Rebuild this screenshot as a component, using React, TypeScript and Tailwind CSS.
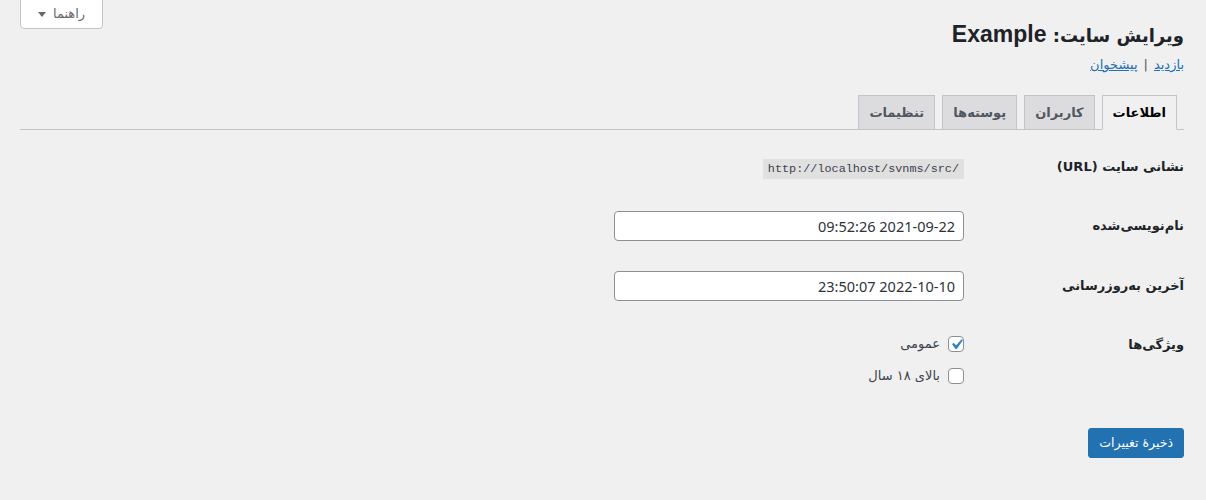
import React, { useState } from 'react'

const fa = { fontFamily: '"DejaVu Sans", "Liberation Sans", sans-serif' }

const tabs = ['اطلاعات', 'کاربران', 'پوسته‌ها', 'تنظیمات']

export default function App() {
  const [isPublic, setIsPublic] = useState(true)
  const [mature, setMature] = useState(false)

  return (
    <div dir="rtl" className="min-h-screen bg-[#f0f0f1] text-[#1d2327]" style={fa}>
      <div className="pr-[22px] pl-[20px]">
        {/* header */}
        <div className="flex items-start justify-between">
          <div>
            <h1 className="pt-[20px] text-[18px] leading-[29px] font-bold text-[#1d2327]">
              ویرایش سایت:{' '}
              <span className="text-[23px]" style={{ fontFamily: '"Liberation Sans", sans-serif' }}>
                Example
              </span>
            </h1>
            <p className="mt-[6px] text-[13px] leading-[17px] text-[#50575e]">
              <a href="#" className="text-[#2271b1] underline">بازدید</a>
              <span className="mx-[6px]">|</span>
              <a href="#" className="text-[#2271b1] underline">پیشخوان</a>
            </p>
          </div>
          <button className="mt-[-1px] h-[30px] w-[83px] flex items-center justify-center gap-[7px] bg-white border border-[#c3c4c7] rounded-b-[4px] text-[13px] text-[#646970]">
            <span>راهنما</span>
            <span className="w-0 h-0 border-l-[4px] border-r-[4px] border-t-[5px] border-l-transparent border-r-transparent border-t-[#646970]" />
          </button>
        </div>

        {/* tabs */}
        <div className="mt-[22px] flex gap-[7px] pr-[7px] border-b border-[#c3c4c7]">
          {tabs.map((t, i) => (
            <a
              key={t}
              href="#"
              className={
                i === 0
                  ? 'mb-[-1px] px-[10px] pt-[5px] pb-[4px] leading-[24px] text-[13px] font-bold border border-[#c3c4c7] border-b-[#f0f0f1] bg-[#f0f0f1] text-black'
                  : 'mb-[-1px] px-[10px] pt-[5px] pb-[4px] leading-[24px] text-[13px] font-bold border border-[#c3c4c7] bg-[#dcdcde] text-[#50575e]'
              }
            >
              {t}
            </a>
          ))}
        </div>

        {/* form rows */}
        <div className="mt-[8px]">
          <div className="flex items-center">
            <div className="w-[210px] shrink-0 pl-[10px] py-[20px] text-[13px] font-bold leading-[18px]">
              نشانی سایت (URL)
            </div>
            <div className="px-[10px]">
              <code
                dir="ltr"
                className="inline-block px-[5px] pt-[3px] pb-[2px] leading-[15px] text-[11.8px] bg-[#e0e0e1] text-[#3c434a]"
                style={{ fontFamily: '"Liberation Mono", monospace' }}
              >
                http://localhost/svnms/src/
              </code>
            </div>
          </div>

          {[
            ['نام‌نویسی‌شده', '2021-09-22 09:52:26'],
            ['آخرین به‌روزرسانی', '2022-10-10 23:50:07'],
          ].map(([label, value]) => (
            <div key={label} className="flex items-start">
              <div className="w-[210px] shrink-0 pl-[10px] py-[21px] text-[13px] font-bold leading-[18px]">
                {label}
              </div>
              <div className="px-[10px] py-[15px]">
                <input
                  defaultValue={value}
                  className="w-[350px] h-[30px] px-[8px] bg-white border border-[#8c8f94] rounded-[4px] text-[14.5px] text-[#2c3338] outline-none"
                  style={{ fontFamily: '"Noto Sans", sans-serif' }}
                />
              </div>
            </div>
          ))}

          <div className="flex items-start">
            <div className="w-[210px] shrink-0 pl-[10px] py-[20px] text-[13px] font-bold leading-[18px]">
              ویژگی‌ها
            </div>
            <div className="px-[10px] pt-[20px] pb-[15px] flex flex-col gap-[16px]">
              <label className="flex items-center gap-[8px] h-[16px] text-[13px] text-[#3c434a]">
                <Check checked={isPublic} onChange={() => setIsPublic(!isPublic)} />
                عمومی
              </label>
              <label className="flex items-center gap-[8px] h-[16px] text-[13px] text-[#3c434a]">
                <Check checked={mature} onChange={() => setMature(!mature)} />
                بالای ۱۸ سال
              </label>
            </div>
          </div>
        </div>

        <div className="pt-[29px]">
          <button className="h-[30px] px-[10px] rounded-[3px] bg-[#2271b1] text-white text-[12.5px] border border-[#2271b1]">
            ذخیرهٔ تغییرات
          </button>
        </div>
      </div>
    </div>
  )
}

function Check({ checked, onChange }: { checked: boolean; onChange: () => void }) {
  return (
    <span
      onClick={onChange}
      className="w-[16px] h-[16px] shrink-0 flex items-center justify-center bg-white border border-[#8c8f94] rounded-[4px] cursor-pointer overflow-visible"
    >
      {checked && (
        <svg width="21" height="21" viewBox="0 0 20 20" className="shrink-0 -m-[3px]">
          <path d="M14.83 4.89l1.34.94-5.81 8.38H9.02L5.78 9.67l1.34-1.25 2.57 2.4z" fill="#3582c4" />
        </svg>
      )}
    </span>
  )
}
